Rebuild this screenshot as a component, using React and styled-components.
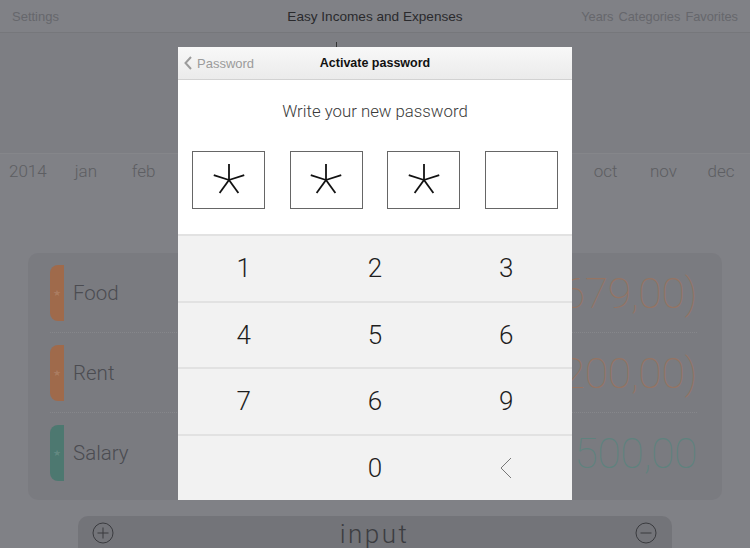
import React from "react";
import styled, { createGlobalStyle } from "styled-components";

const Global = createGlobalStyle`
  html, body { margin: 0; padding: 0; }
  body { width: 750px; height: 548px; overflow: hidden; background: #808186; font-family: "Liberation Sans", Arial, sans-serif; }
  * { box-sizing: border-box; }
`;

const Page = styled.div`
  position: relative;
  width: 750px;
  height: 548px;
  overflow: hidden;
  background: #808186;
  display: flex;
  flex-direction: column;
`;

const NavBar = styled.div`
  height: 33px;
  flex: none;
  display: grid;
  grid-template-columns: 1fr auto 1fr;
  align-items: center;
  padding: 0 12px;
  border-bottom: 1px solid #76777b;
  font-size: 13px;
  color: #66676c;
`;

const NavTitle = styled.div`
  font-size: 13.6px;
  color: #2a2a2d;
`;

const NavRight = styled.div`
  justify-self: end;
  display: flex;
  gap: 5px;
  font-size: 12.8px;
`;

const Chart = styled.div`
  height: 120px;
  flex: none;
  background: #7d7e83;
  svg { display: block; }
`;

const MonthRow = styled.div`
  height: 34px;
  flex: none;
  display: flex;
  align-items: center;
  border-top: 1px solid #85868a;
  font-family: "Roboto", sans-serif;
  font-weight: 300;
  font-size: 17px;
  color: #5d5e62;
`;

const Year = styled.div`
  width: 57px;
  padding-left: 9px;
`;

const Month = styled.div`
  flex: 1;
  text-align: center;
`;

const Card = styled.div`
  margin: 66px 28px 0;
  height: 247px;
  flex: none;
  border-radius: 10px;
  background: #7a7b80;
  padding: 0 25px 0 22px;
`;

const Row = styled.div`
  height: 80px;
  display: flex;
  align-items: center;
  border-bottom: ${(p) => (p.$last ? "none" : "1px dotted #86878b")};
`;

const Tag = styled.div`
  width: 14px;
  height: 56px;
  border-radius: 8px 0 0 8px;
  background: ${(p) => p.$color};
  display: flex;
  align-items: center;
  justify-content: center;
  font-size: 9px;
  color: rgba(255, 255, 255, 0.14);
`;

const RowLabel = styled.div`
  margin-left: 9px;
  font-family: "Roboto", sans-serif;
  font-weight: 300;
  font-size: 20.5px;
  color: #4b4c51;
  flex: 1;
`;

const Amount = styled.div`
  font-family: "Roboto", sans-serif;
  font-weight: 100;
  font-size: 43px;
  letter-spacing: -0.5px;
  color: ${(p) => p.$color};
`;

const BottomBar = styled.div`
  margin: 16px 78px 0;
  height: 60px;
  flex: none;
  border-radius: 10px 10px 0 0;
  background: #737479;
  display: flex;
  align-items: flex-start;
  justify-content: space-between;
  padding: 6px 15px 0 14px;
  color: #3d3e42;
`;

const BarTitle = styled.div`
  font-family: "Roboto", sans-serif;
  font-weight: 300;
  font-size: 26px;
  letter-spacing: 2.5px;
  line-height: 24px;
  margin-top: 0;
  color: #3c3d41;
`;

const RoundIcon = styled.svg`
  display: block;
`;

const Backdrop = styled.div`
  position: absolute;
  left: 178px;
  top: 47px;
  width: 394px;
  height: 453px;
  display: flex;
  flex-direction: column;
  background: #f2f2f2;
  overflow: hidden;
`;

const ModalHeader = styled.div`
  height: 33px;
  flex: none;
  display: grid;
  grid-template-columns: 1fr auto 1fr;
  align-items: center;
  padding: 0 6px;
  background: linear-gradient(#f8f8f8, #ebebeb);
  border-bottom: 1px solid #d2d2d2;
`;

const BackButton = styled.div`
  display: flex;
  align-items: center;
  gap: 5px;
  font-size: 13px;
  color: #9b9b9b;
`;

const ModalTitle = styled.div`
  font-size: 12.5px;
  font-weight: bold;
  color: #111;
`;

const Content = styled.div`
  height: 154px;
  flex: none;
  background: #fff;
  display: flex;
  flex-direction: column;
  align-items: center;
  padding-top: 19px;
`;

const Prompt = styled.div`
  font-family: "Roboto", sans-serif;
  font-weight: 300;
  font-size: 16.8px;
  line-height: 24px;
  color: #3a3a3a;
`;

const Boxes = styled.div`
  margin-top: 28px;
  width: 100%;
  padding: 0 14px;
  display: flex;
  justify-content: space-between;
`;

const Box = styled.div`
  width: 73px;
  height: 58px;
  border: 1px solid #666;
  background: #fff;
  display: flex;
  align-items: center;
  justify-content: center;
`;

const Keypad = styled.div`
  flex: 1;
  display: grid;
  grid-template-rows: repeat(4, 1fr);
`;

const KeyRow = styled.div`
  display: grid;
  grid-template-columns: repeat(3, 1fr);
  border-top: 2px solid #e2e2e2;
`;

const Key = styled.div`
  display: flex;
  align-items: center;
  justify-content: center;
  font-family: "Roboto", sans-serif;
  font-weight: 300;
  font-size: 26px;
  color: #1e1e1e;
`;

const Star = () => {
  const arms = [-90, -18, 54, 126, 198];
  return (
    <svg width="34" height="34" viewBox="-17 -17 34 34">
      {arms.map((a) => {
        const r = (a * Math.PI) / 180;
        return (
          <line
            key={a}
            x1="0"
            y1="0"
            x2={(16 * Math.cos(r)).toFixed(2)}
            y2={(16 * Math.sin(r)).toFixed(2)}
            stroke="#111"
            strokeWidth="1.8"
          />
        );
      })}
    </svg>
  );
};

const PlusMinus = ({ plus }) => (
  <RoundIcon width="22" height="22" viewBox="0 0 22 22">
    <circle cx="11" cy="11" r="10" fill="none" stroke="#3a3b3f" strokeWidth="1" />
    <line x1="5.5" y1="11" x2="16.5" y2="11" stroke="#3a3b3f" strokeWidth="1" />
    {plus && <line x1="11" y1="5.5" x2="11" y2="16.5" stroke="#3a3b3f" strokeWidth="1" />}
  </RoundIcon>
);

const months = ["jan", "feb", "mar", "apr", "may", "jun", "jul", "aug", "sep", "oct", "nov", "dec"];

const rows = [
  { label: "Food", amount: "($679,00)", tag: "#9f6a4b", color: "#957463" },
  { label: "Rent", amount: "($1.200,00)", tag: "#9f6a4b", color: "#957463" },
  { label: "Salary", amount: "$1.500,00", tag: "#4d7870", color: "#5f827e" },
];

const keys = [
  ["1", "2", "3"],
  ["4", "5", "6"],
  ["7", "6", "9"],
  ["", "0", "back"],
];

export default function App() {
  return (
    <Page>
      <Global />
      <NavBar>
        <div>Settings</div>
        <NavTitle>Easy Incomes and Expenses</NavTitle>
        <NavRight>
          <span>Years</span>
          <span>Categories</span>
          <span>Favorites</span>
        </NavRight>
      </NavBar>
      <Chart>
        <svg width="750" height="120" viewBox="0 0 750 120">
          <line x1="336.5" y1="9" x2="336.5" y2="120" stroke="#333" strokeWidth="1" />
        </svg>
      </Chart>
      <MonthRow>
        <Year>2014</Year>
        {months.map((m) => (
          <Month key={m}>{m}</Month>
        ))}
      </MonthRow>
      <Card>
        {rows.map((r, i) => (
          <Row key={r.label} $last={i === rows.length - 1}>
            <Tag $color={r.tag}>★</Tag>
            <RowLabel>{r.label}</RowLabel>
            <Amount $color={r.color}>{r.amount}</Amount>
          </Row>
        ))}
      </Card>
      <BottomBar>
        <PlusMinus plus />
        <BarTitle>input</BarTitle>
        <PlusMinus />
      </BottomBar>

      <Backdrop>
        <ModalHeader>
          <BackButton>
            <svg width="8" height="14" viewBox="0 0 8 14">
              <polyline points="7,1 1.5,7 7,13" fill="none" stroke="#9b9b9b" strokeWidth="2" />
            </svg>
            Password
          </BackButton>
          <ModalTitle>Activate password</ModalTitle>
          <div />
        </ModalHeader>
        <Content>
          <Prompt>Write your new password</Prompt>
          <Boxes>
            <Box><Star /></Box>
            <Box><Star /></Box>
            <Box><Star /></Box>
            <Box />
          </Boxes>
        </Content>
        <Keypad>
          {keys.map((row, i) => (
            <KeyRow key={i}>
              {row.map((k, j) => (
                <Key key={j}>
                  {k === "back" ? (
                    <svg width="12" height="22" viewBox="0 0 12 22">
                      <polyline points="11,1 1,11 11,21" fill="none" stroke="#777" strokeWidth="1" />
                    </svg>
                  ) : (
                    k
                  )}
                </Key>
              ))}
            </KeyRow>
          ))}
        </Keypad>
      </Backdrop>
    </Page>
  );
}
